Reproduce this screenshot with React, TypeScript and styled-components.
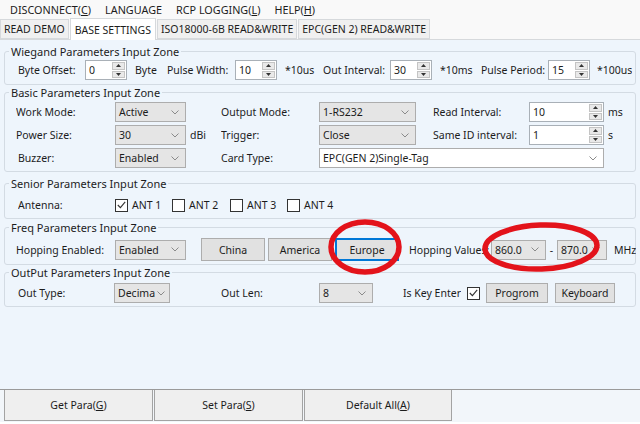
import React from 'react';
import styled, { createGlobalStyle } from 'styled-components';

const GlobalStyle = createGlobalStyle`
  html, body { margin: 0; padding: 0; background: #ffffff; }
  body {
    font-family: "Noto Sans", "Liberation Sans", sans-serif;
    font-size: 10.5px;
    color: #1c1c1c;
  }
`;

const Window = styled.div`
  position: relative;
  width: 640px;
  height: 424px;
  display: flex;
  flex-direction: column;
  background: #f9f9f9;
  overflow: hidden;
`;

const MenuBar = styled.nav`
  height: 19px;
  display: flex;
  align-items: center;
  gap: 14px;
  padding-left: 10px;
  font-size: 10.8px;
`;

const MenuItem = styled.span`
  white-space: nowrap;
  u { text-decoration: underline; }
`;

const TabStrip = styled.div`
  height: 20px;
  display: flex;
  align-items: flex-end;
  border-bottom: 1px solid #d6d9dc;
`;

const Tab = styled.div<{ $active?: boolean }>`
  height: ${(p) => (p.$active ? 21 : 18)}px;
  margin-bottom: ${(p) => (p.$active ? -1 : 0)}px;
  padding: 0 ${(p) => (p.$active ? 4 : 3)}px;
  display: flex;
  align-items: center;
  font-size: 10.5px;
  white-space: nowrap;
  background: ${(p) => (p.$active ? '#ffffff' : '#f0f0f0')};
  border: 1px solid #d6d9dc;
  border-bottom: ${(p) => (p.$active ? 'none' : '1px solid #d6d9dc')};
  margin-right: 1px;
  position: relative;
  z-index: ${(p) => (p.$active ? 1 : 0)};
`;

const Panel = styled.main`
  flex: 1;
  background: #eef5fc;
  padding-top: 4px;
  display: flex;
  flex-direction: column;
`;

const Group = styled.fieldset<{ $mt?: number; $pt?: number; $pb?: number }>`
  margin: ${(p) => p.$mt ?? 0}px 4px 0 4px;
  padding: ${(p) => p.$pt ?? 1}px 0 ${(p) => p.$pb ?? 4}px 0;
  border: 1px solid #d3dbe3;
  border-radius: 3px;
  min-width: 0;
`;

const Legend = styled.legend`
  margin-left: 4px;
  padding: 0 2px;
  line-height: 15px;
  font-size: 11px;
  color: #1c1c1c;
`;

const Row = styled.div<{ $pl?: number; $h?: number }>`
  display: flex;
  align-items: center;
  height: ${(p) => p.$h ?? 20}px;
  padding-left: ${(p) => p.$pl ?? 13}px;
`;

const Label = styled.span<{ $w?: number; $ml?: number }>`
  flex: none;
  width: ${(p) => (p.$w ? `${p.$w}px` : 'auto')};
  margin-left: ${(p) => p.$ml ?? 0}px;
  white-space: nowrap;
  overflow: hidden;
`;

const Dash = styled.span`
  flex: none;
  width: 11px;
  text-align: center;
`;

const BasicGrid = styled.div`
  display: grid;
  grid-template-columns: 99px 71px 35px 98px 97px 17px 96px 75px 1fr;
  grid-auto-rows: 20px;
  row-gap: 3px;
  align-items: center;
  padding-left: 11px;
`;

const WideCell = styled.div`
  grid-column: 5 / 9;
`;

const UnitCell = styled.span`
  padding-left: 4px;
  white-space: nowrap;
`;

/* spin box */
const SpinWrap = styled.div<{ $w: number }>`
  flex: none;
  width: ${(p) => p.$w}px;
  height: 20px;
  box-sizing: border-box;
  border: 1px solid #a9b0b7;
  background: #ffffff;
  display: flex;
`;

const SpinText = styled.span`
  flex: 1;
  padding-left: 3px;
  line-height: 18px;
`;

const SpinButtons = styled.div`
  width: 13px;
  display: flex;
  flex-direction: column;
  padding: 1px 1px 1px 0;
  gap: 1px;
`;

const SpinHalf = styled.div`
  flex: 1;
  background: #e9e9e9;
  border: 1px solid #c4c4c4;
  display: flex;
  align-items: center;
  justify-content: center;
`;

const Spin = ({ value, w = 42 }: { value: string; w?: number }) => (
  <SpinWrap $w={w}>
    <SpinText>{value}</SpinText>
    <SpinButtons>
      <SpinHalf>
        <svg width="5" height="3" viewBox="0 0 5 3"><path d="M0 3 L2.5 0 L5 3Z" fill="#333" /></svg>
      </SpinHalf>
      <SpinHalf>
        <svg width="5" height="3" viewBox="0 0 5 3"><path d="M0 0 L2.5 3 L5 0Z" fill="#333" /></svg>
      </SpinHalf>
    </SpinButtons>
  </SpinWrap>
);

/* combo box */
const ComboWrap = styled.div<{ $w?: number; $white?: boolean }>`
  flex: none;
  width: ${(p) => (p.$w ? `${p.$w}px` : 'auto')};
  height: 20px;
  box-sizing: border-box;
  border: 1px solid #adadad;
  background: ${(p) => (p.$white ? '#ffffff' : '#e5e5e5')};
  display: flex;
  align-items: center;
  gap: 2px;
  padding: 0 6px 0 3px;
  overflow: hidden;
`;

const ComboText = styled.span`
  flex: 1;
  white-space: nowrap;
`;

const Chevron = () => (
  <svg width="8" height="5" viewBox="0 0 8 5" style={{ flex: 'none' }}>
    <path d="M0.5 0.5 L4 4 L7.5 0.5" fill="none" stroke="#8a8a8a" strokeWidth="1" />
  </svg>
);

const Combo = ({ value, w, white }: { value: string; w?: number; white?: boolean }) => (
  <ComboWrap $w={w} $white={white}>
    <ComboText>{value}</ComboText>
    <Chevron />
  </ComboWrap>
);

/* check box */
const CheckItem = styled.label<{ $w?: number; $ml?: number }>`
  flex: none;
  width: ${(p) => (p.$w ? `${p.$w}px` : 'auto')};
  margin-left: ${(p) => p.$ml ?? 0}px;
  display: flex;
  align-items: center;
  gap: 4px;
  white-space: nowrap;
`;

const Box = styled.span`
  width: 13px;
  height: 13px;
  box-sizing: border-box;
  border: 1px solid #333333;
  background: #ffffff;
  display: flex;
  align-items: center;
  justify-content: center;
`;

const Check = ({ checked }: { checked?: boolean }) => (
  <Box>
    {checked && (
      <svg width="9" height="8" viewBox="0 0 9 8">
        <path d="M0.8 4 L3.4 6.6 L8.2 0.8" fill="none" stroke="#333" strokeWidth="1.1" />
      </svg>
    )}
  </Box>
);

const Button = styled.button<{ $w: number; $h?: number; $ml?: number; $focus?: boolean }>`
  flex: none;
  width: ${(p) => p.$w}px;
  height: ${(p) => p.$h ?? 20}px;
  margin-left: ${(p) => p.$ml ?? 0}px;
  padding: 0;
  font: inherit;
  color: #1c1c1c;
  background: #e1e1e1;
  border: 1px solid ${(p) => (p.$focus ? '#0078d7' : '#adadad')};
  box-shadow: ${(p) => (p.$focus ? 'inset 0 0 0 1px #0078d7' : 'none')};
`;

const Footer = styled.footer`
  height: 32px;
  display: flex;
  align-items: flex-start;
  padding-left: 4px;
  border-top: 1px solid #9a9a9a;
  border-bottom: 2px solid #ffffff;
  background: #f2f6fa;
`;

const FooterButton = styled.button<{ $w: number }>`
  width: ${(p) => p.$w}px;
  height: 31px;
  margin-right: 1px;
  padding: 0;
  font: inherit;
  color: #1c1c1c;
  background: #efefef;
  border: 1px solid #a3a3a3;
  border-top: none;
`;

const Annotations = styled.svg`
  position: absolute;
  left: 0;
  top: 0;
  pointer-events: none;
`;

export default function App() {
  return (
    <Window>
      <GlobalStyle />
      <MenuBar>
        <MenuItem>DISCONNECT(<u>C</u>)</MenuItem>
        <MenuItem>LANGUAGE</MenuItem>
        <MenuItem>RCP LOGGING(<u>L</u>)</MenuItem>
        <MenuItem>HELP(<u>H</u>)</MenuItem>
      </MenuBar>
      <TabStrip>
        <Tab>READ DEMO</Tab>
        <Tab $active>BASE SETTINGS</Tab>
        <Tab>ISO18000-6B READ&amp;WRITE</Tab>
        <Tab>EPC(GEN 2) READ&amp;WRITE</Tab>
      </TabStrip>
      <Panel>
        <Group $pt={1} $pb={4}>
          <Legend>Wiegand Parameters Input Zone</Legend>
          <Row>
            <Label $w={67}>Byte Offset:</Label>
            <Spin value="0" />
            <Label $w={32} $ml={8}>Byte</Label>
            <Label $w={68}>Pulse Width:</Label>
            <Spin value="10" />
            <Label $w={38} $ml={8}>*10us</Label>
            <Label $w={67}>Out Interval:</Label>
            <Spin value="30" />
            <Label $w={41} $ml={8}>*10ms</Label>
            <Label $w={67}>Pulse Period:</Label>
            <Spin value="15" />
            <Label $ml={7}>*100us</Label>
          </Row>
        </Group>

        <Group $pt={2} $pb={3}>
          <Legend>Basic Parameters Input Zone</Legend>
          <BasicGrid>
            <Label>Work Mode:</Label>
            <Combo value="Active" w={71} />
            <span />
            <Label>Output Mode:</Label>
            <Combo value="1-RS232" w={97} />
            <span />
            <Label>Read Interval:</Label>
            <Spin value="10" w={75} />
            <UnitCell>ms</UnitCell>

            <Label>Power Size:</Label>
            <Combo value="30" w={71} />
            <UnitCell>dBi</UnitCell>
            <Label>Trigger:</Label>
            <Combo value="Close" w={97} />
            <span />
            <Label>Same ID interval:</Label>
            <Spin value="1" w={75} />
            <UnitCell>s</UnitCell>

            <Label $ml={2}>Buzzer:</Label>
            <Combo value="Enabled" w={71} />
            <span />
            <Label>Card Type:</Label>
            <WideCell>
              <Combo value="EPC(GEN 2)Single-Tag" white />
            </WideCell>
          </BasicGrid>
        </Group>

        <Group $mt={4} $pt={4} $pb={3}>
          <Legend>Senior Parameters Input Zone</Legend>
          <Row>
            <Label $w={97}>Antenna:</Label>
            <CheckItem $w={57}><Check checked />ANT 1</CheckItem>
            <CheckItem $w={58}><Check />ANT 2</CheckItem>
            <CheckItem $w={57}><Check />ANT 3</CheckItem>
            <CheckItem><Check />ANT 4</CheckItem>
          </Row>
        </Group>

        <Group $mt={1} $pt={3} $pb={3}>
          <Legend>Freq Parameters Input Zone</Legend>
          <Row $pl={11} $h={23}>
            <Label $w={99}>Hopping Enabled:</Label>
            <Combo value="Enabled" w={71} />
            <Button $w={64} $h={23} $ml={15}>China</Button>
            <Button $w={64} $h={23} $ml={3}>America</Button>
            <Button $w={64} $h={23} $ml={3} $focus>Europe</Button>
            <Label $w={82} $ml={10}>Hopping Values:</Label>
            <Combo value="860.0" w={55} />
            <Dash>-</Dash>
            <Combo value="870.0" w={50} />
            <Label $ml={7}>MHz</Label>
          </Row>
        </Group>

        <Group $pt={3} $pb={3}>
          <Legend>OutPut Parameters Input Zone</Legend>
          <Row>
            <Label $w={96}>Out Type:</Label>
            <Combo value="Decima" w={56} />
            <Label $w={98} $ml={51}>Out Len:</Label>
            <Combo value="8" w={54} />
            <Label $ml={30}>Is Key Enter</Label>
            <CheckItem $ml={6}><Check checked /></CheckItem>
            <Button $w={62} $ml={6}>Progrom</Button>
            <Button $w={60} $ml={7}>Keyboard</Button>
          </Row>
        </Group>
      </Panel>
      <Footer>
        <FooterButton $w={149}>Get Para(<u>G</u>)</FooterButton>
        <FooterButton $w={149}>Set Para(<u>S</u>)</FooterButton>
        <FooterButton $w={148}>Default All(<u>A</u>)</FooterButton>
      </Footer>
      <Annotations width="640" height="424" viewBox="0 0 640 424">
        <ellipse cx="365" cy="247" rx="34" ry="25" fill="none" stroke="#e3131b" strokeWidth="5.5" />
        <ellipse cx="541" cy="247" rx="56" ry="22" fill="none" stroke="#e3131b" strokeWidth="5.5" transform="rotate(-2 541 247)" />
      </Annotations>
    </Window>
  );
}
